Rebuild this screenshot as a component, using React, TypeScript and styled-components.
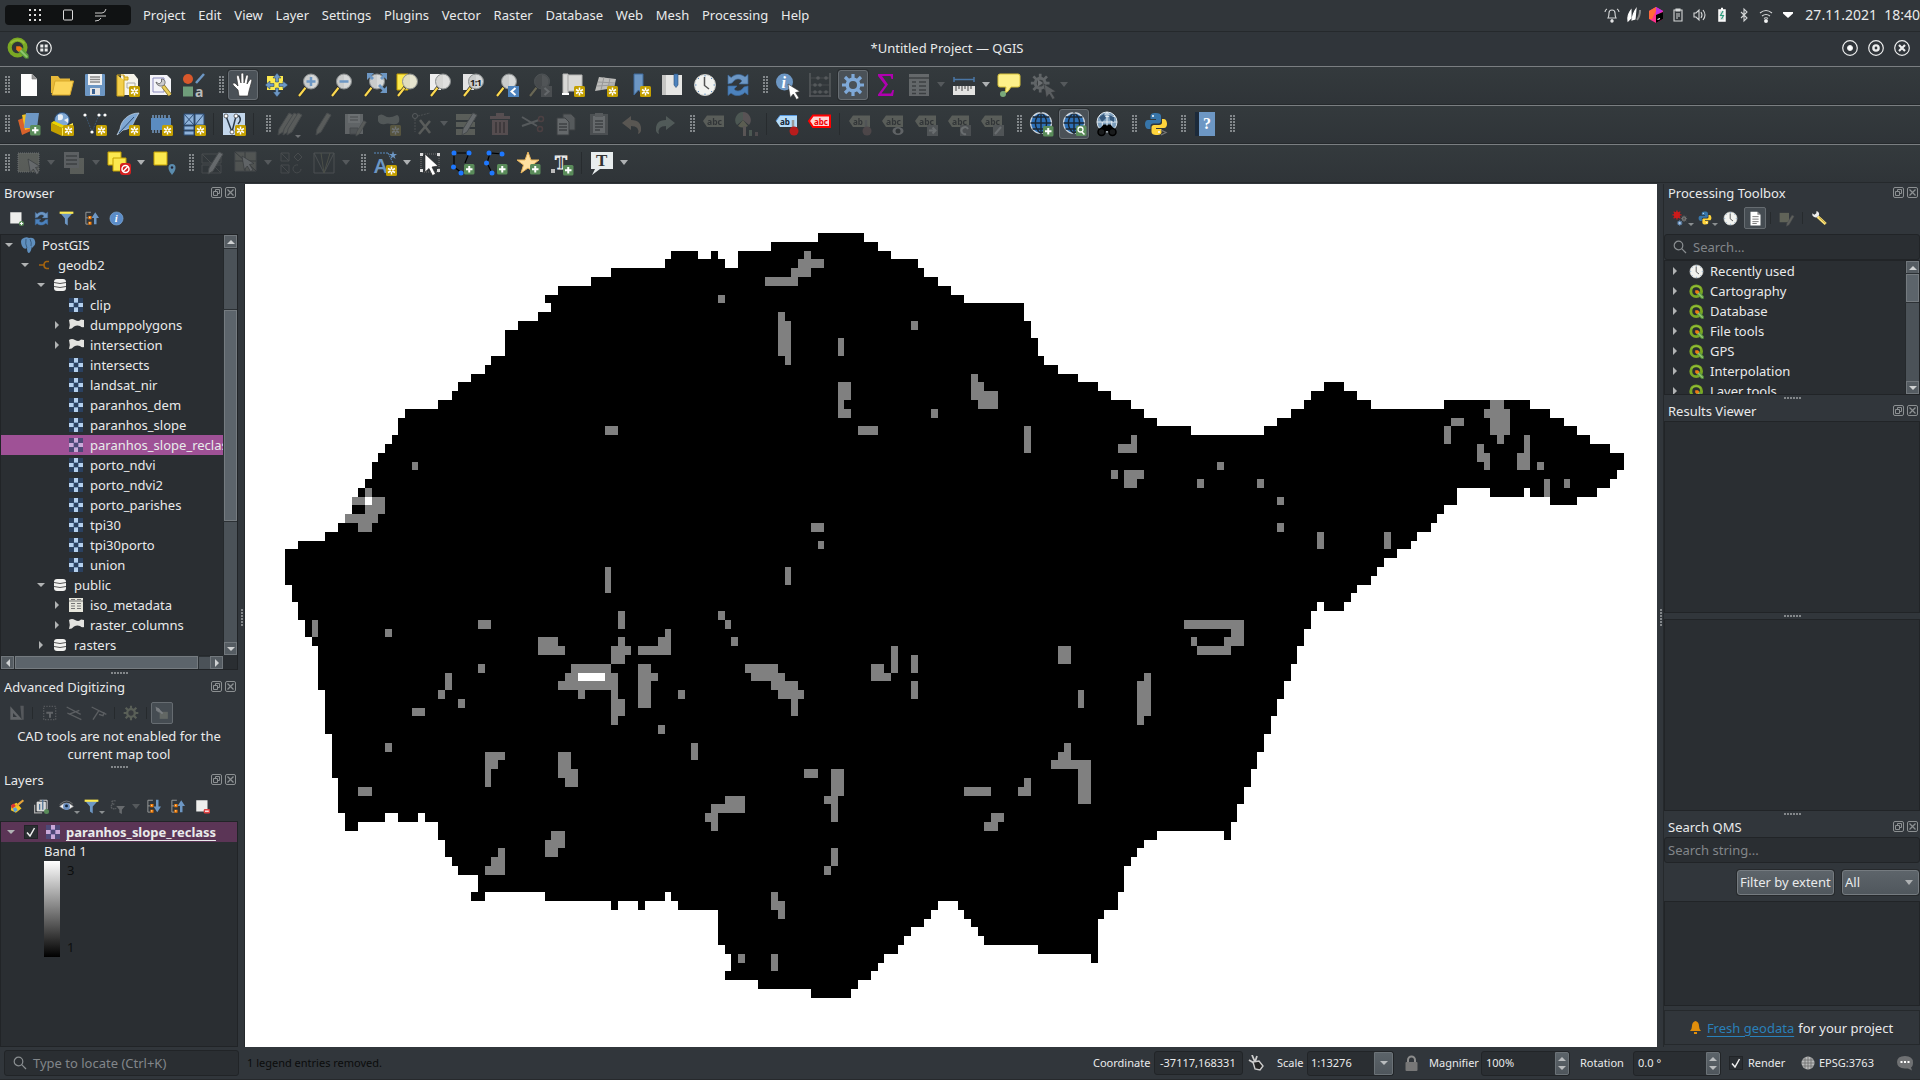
import React from "react";
import styled, { createGlobalStyle } from "styled-components";

const Global = createGlobalStyle`
  * { box-sizing: border-box; }
  body { margin: 0; background: #31363b; overflow: hidden; }
`;

/* ---------- page frame ---------- */
const Shell = styled.div`
  width: 1920px; height: 1080px; display: flex; flex-direction: column;
  background: #31363b; color: #e9eaeb; overflow: hidden;
  font: 13px/20px "Noto Sans", sans-serif; white-space: nowrap;
`;
const SystemBar = styled.header`
  height: 32px; display: flex; align-items: center; padding-left: 5px;
  background: #31363a; border-bottom: 1px solid #25292c; flex: none;
`;
const Pill = styled.div`
  width: 126px; height: 20px; border-radius: 4px; background: #101213; margin-right: 12px;
  display: flex; align-items: center; padding-left: 24px; gap: 20px; margin-top: -1px;
`;
const Menu = styled.nav`
  display: flex; gap: 12.8px; margin-top: -2px; flex: 1;
`;
const Tray = styled.div`
  display: flex; align-items: center; gap: 6px; margin-top: -1px;
`;
const Clock = styled.span`font-size: 14px; margin-left: 3px; white-space: pre; margin-top: -1px;`;
const TitleBar = styled.div`
  height: 34px; flex: none; display: grid; grid-template-columns: 200px 1fr 223px; align-items: center;
  padding: 0 10px 2px 7px; background: #30353a; text-align: center;
`;
const TitleSide = styled.div<{ $end?: boolean }>`
  display: flex; align-items: center; gap: ${p => (p.$end ? 10 : 7)}px;
  justify-content: ${p => (p.$end ? "flex-end" : "flex-start")};
`;
const Body = styled.div`height: 864px; padding-top: 1px; display: flex; flex: none;`;

/* ---------- toolbars ---------- */
const Toolbar = styled.div`
  height: 39px; flex: none; display: flex; align-items: center; padding-bottom: 2px;
  border-top: 1px solid #7a7e81; border-bottom: 1px solid #25292c;
  background: linear-gradient(#343a3d, #2f3438);
  &:last-of-type { border-bottom-color: #7a7e81; }
`;
const Slot = styled.div<{ $on?: boolean; $off?: boolean }>`
  width: 33px; height: 30px; flex: none; display: flex; align-items: center; justify-content: center;
  svg { opacity: ${p => (p.$off ? 0.3 : 1)}; ${p => (p.$off ? "filter: grayscale(.5);" : "")} }
  ${p => p.$on && `
    width: 30px; margin: 0 1.5px; border: 1px solid #686e73; border-radius: 3px;
    background: #4a5157; box-shadow: 0 0 0 1px #292d30;`}
`;
const Grip = styled.div<{ $first?: boolean }>`
  width: ${p => (p.$first ? 12 : 16)}px; height: 18px; flex: none;
  padding-left: ${p => (p.$first ? 5 : 9)}px;
  &::before {
    content: ""; display: block; width: 5px; height: 18px;
    background: repeating-linear-gradient(90deg, transparent 0 2px, #31363a 2px 3px),
      repeating-linear-gradient(#83888b 0 2px, transparent 2px 3px);
  }
`;
const Sep = styled.div`width: 7px; height: 22px; flex: none; padding-left: 3px;
  &::before { content: ""; display: block; width: 1px; height: 22px; background: #272b2e; }
`;
const Caret = styled.div<{ $off?: boolean; $w?: number }>`
  width: ${p => p.$w || 12}px; flex: none; display: flex; justify-content: center;
  &::before { content: ""; border: 4px solid transparent; border-top: 5px solid ${p => (p.$off ? "#55595c" : "#aeb1b3")}; border-bottom: 0; }
`;

/* ---------- docks ---------- */
const Dock = styled.aside<{ $w: number }>`
  width: ${p => p.$w}px; flex: none; display: flex; flex-direction: column;
`;
const DockTitle = styled.div<{ $h: number }>`
  height: ${p => p.$h}px; flex: none; display: flex; align-items: center; gap: 3px; padding: 0 2px 0 4px;
  & > span { flex: 1; }
  svg { margin-top: -2px; }
`;
const SmallBar = styled.div<{ $h: number }>`
  height: ${p => p.$h}px; flex: none; display: flex; align-items: center; padding-left: 4px;
`;
const SmallSlot = styled.div<{ $on?: boolean; $off?: boolean; $w?: number }>`
  width: ${p => p.$w || 25}px; height: 22px; flex: none; display: flex; align-items: center; justify-content: center;
  svg { opacity: ${p => (p.$off ? 0.35 : 1)}; }
  ${p => p.$on && `width: 22px; margin: 0 1px; border: 1px solid #666c71; border-radius: 2px; background: #454c52;`}
`;
const SmallSep = styled.div`width: 7px; height: 12px; flex: none;
  &::before { content: ""; display: block; width: 1px; height: 12px; margin-left: 3px; background: #262a2d; }`;
const MiniCaret = styled.i`
  width: 0; height: 0; margin: 12px -5px 0 0; border: 3px solid transparent; border-top: 3px solid #8b8f91; border-bottom: 0;
`;
const Well = styled.div<{ $h: number; $row?: boolean }>`
  height: ${p => p.$h}px; flex: none; background: #2a2e32; border: 1px solid #212427; overflow: hidden;
  display: flex; flex-direction: ${p => (p.$row ? "row" : "column")};
`;
const Dots = styled.div<{ $h: number }>`
  height: ${p => p.$h}px; flex: none; display: flex; align-items: center; justify-content: center;
  &::before { content: ""; width: 17px; height: 2px; background: repeating-linear-gradient(90deg, #83878a 0 2px, transparent 2px 3px); }
`;
const VDots = styled.div`
  width: 7px; flex: none; display: flex; align-items: center; justify-content: center; padding-left: 2px; border-right: 1px solid #25292c;
  &::before { content: ""; height: 17px; width: 2px; margin-top: 4px; background: repeating-linear-gradient(#83878a 0 2px, transparent 2px 3px); }
`;
const TreeArea = styled.div`display: flex; flex: 1; min-height: 0;`;
const Rows = styled.div`flex: 1; min-width: 0; overflow: hidden;`;
const Row = styled.div<{ $depth: number; $sel?: boolean }>`
  height: 20px; display: flex; align-items: center; padding-left: ${p => p.$depth * 16}px; overflow: hidden;
  background: ${p => (p.$sel ? "#9f5196" : "transparent")};
`;
const Expander = styled.i<{ $state?: string; $w?: number }>`
  width: ${p => p.$w || 19}px; flex: none; display: flex; justify-content: center; padding-right: 4px;
  &::before {
    content: ""; border: 4px solid transparent;
    ${p => p.$state === "open" && "border-top: 4px solid #b1b3b4; border-bottom: 0;"}
    ${p => p.$state === "closed" && "border-left: 4px solid #b1b3b4; border-right: 0;"}
  }
`;
const RowLabel = styled.span`margin-left: 6px;`;

const VScroll = styled.div`width: 14px; flex: none; display: flex; flex-direction: column; background: #4b5258; border-left: 1px solid #25292c;`;
const HScroll = styled.div`height: 14px; flex: none; display: flex; background: #4b5258; border-top: 1px solid #25292c; margin-right: 14px;`;
const ScrollBtn = styled.div<{ $dir: "up" | "down" | "left" | "right" }>`
  width: 13px; height: 13px; flex: none; background: #555c62; border: 1px solid #71777c;
  display: flex; align-items: center; justify-content: center;
  &::before {
    content: ""; border: 4px solid transparent;
    ${p => ({
      up: "border-bottom-color: #cfd1d2; border-top: 0;",
      down: "border-top-color: #cfd1d2; border-bottom: 0;",
      left: "border-right-color: #cfd1d2; border-left: 0;",
      right: "border-left-color: #cfd1d2; border-right: 0;",
    }[p.$dir])}
  }
`;
const Track = styled.div<{ $n: number }>`flex: ${p => p.$n} 1 0; border: solid #2c3135; border-width: 1px 0 0;`;
const Thumb = styled.div<{ $n: number }>`flex: ${p => p.$n} 1 0; background: #5c646b; border: 1px solid #757b80; outline: 1px solid #2b3034;`;

const Field = styled.div<{ $h: number; $w?: number; $gap?: number; $dim?: boolean; $px?: number }>`
  height: ${p => p.$h}px; ${p => p.$w && `width: ${p.$w}px;`} flex: none; display: flex; align-items: center; gap: ${p => p.$gap || 0}px;
  border: 1px solid #212427; border-radius: 3px; background: #2a2e32; padding-left: ${p => p.$px ?? 3}px;
  color: ${p => (p.$dim ? "#82868a" : "#e9eaeb")};
`;
const FieldText = styled.span`flex: 1;`;
const Spin = styled.div<{ $w: number; $one?: boolean }>`
  width: ${p => p.$w}px; height: 23px; background: linear-gradient(#5b6369, #4f565c); border: 1px solid #6b7277; border-radius: 0 2px 2px 0;
  display: flex; flex-direction: column; align-items: center; justify-content: center; gap: 5px;
  &::before { content: ""; border: 4px solid transparent; border-bottom-color: #b9bcbe; border-top: 0; ${p => p.$one && "display:none;"} }
  &::after { content: ""; border: 4px solid transparent; border-top-color: #b9bcbe; border-bottom: 0; }
`;
const Notice = styled.p`margin: 0; height: 37px; text-align: center; line-height: 18px; white-space: pre-line;`;
const LayerRow = styled.div`height: 20px; display: flex; align-items: center; background: #5b3556; padding-left: 5px;
  b { text-decoration: underline; text-underline-offset: 3px; margin-left: 6px; letter-spacing: -.04px; }`;
const Legend = styled.div`padding-left: 43px; margin-top: -1px;`;
const Ramp = styled.div`display: flex; height: 96px; color: #0d0e0f;
  &::before { content: ""; width: 16px; background: linear-gradient(#fff, #000); margin-right: 7px; }`;
const RampLabels = styled.div`display: flex; flex-direction: column; justify-content: space-between; margin-top: -1px;`;
const Check = styled.div`width: 14px; height: 14px; border: 1px solid #212427; background: #2a2e32; display: flex; align-items: center; justify-content: center; flex: none;`;
const Buttons = styled.div`height: 38px; flex: none; display: flex; align-items: center; justify-content: flex-end; gap: 8px; padding-right: 1px;`;
const PushButton = styled.div<{ $w: number }>`
  width: ${p => p.$w}px; height: 25px; display: flex; align-items: center; justify-content: space-between; padding: 0 2px;
  border: 1px solid #757b80; border-radius: 3px; background: linear-gradient(#5d646a, #50575d); box-shadow: 0 0 0 1px #26292c;
`;
const Card = styled.div`height: 35px; flex: none; border: 1px solid #25292c; display: flex; align-items: center; justify-content: center; margin-top: 4px; padding-right: 1px;`;
const Link = styled.span`color: #2a80b9; text-decoration: underline; text-underline-offset: 3px; margin: 0 4px 0 6px;`;
const Canvas = styled.main`width: 1412px; height: 863px; flex: none; background: #fff; svg { display: block; }`;

const Status = styled.footer`
  flex: 1; display: flex; align-items: center; padding: 0 7px 0 4px; font-size: 11px; border-bottom: 1px solid #26292c;
`;
const Locator = styled(Field)`font-size: 13px;`;
const Message = styled.span`margin-left: 8px; color: #0b0c0c; width: 846px;`;
const StatusLabel = styled.span<{ $w: number }>`width: ${p => p.$w}px; flex: none;`;
const Gap = styled.span<{ $w: number }>`width: ${p => p.$w}px; flex: none; display: flex; justify-content: center;`;
const GrabSlot = styled.span`width: 34px; flex: none; padding-left: 5px; display: flex;`;

/* ---------- icon drawing ---------- */
const BLUE = "#6d97c4";
const Star = ({ x = 13, y = 13 }) => (
  <g transform={`translate(${x} ${y})`}>
    <rect width="11" height="11" rx="1.5" fill="#c4a000" />
    <path d="M5.500 1.500V9.500M2 3.500L9 7.500M9 3.500L2 7.500" stroke="#fff" strokeWidth="1.500" />
    <circle cx="5.500" cy="5.500" r="1" fill="#c4a000" />
  </g>
);
const Plus = ({ x = 13, y = 13 }) => (
  <g transform={`translate(${x} ${y})`}>
    <rect width="10.500" height="10.500" rx="1.500" fill="#5a8c5a" />
    <path d="M5.250 2v6.500M2 5.250h6.500" stroke="#fff" strokeWidth="2" />
  </g>
);
const Lens = ({ fill = "#c9cbcb" }) => (
  <>
    <path d="M9 14L2 23" stroke="#222" strokeWidth="3.400" />
    <path d="M8.500 14.800L2 23" stroke="#fcd94f" strokeWidth="2.200" />
    <circle cx="14" cy="8.500" r="7.500" fill={fill} stroke="#8b8f90" />
    <path d="M14 2a6.500 6.500 0 0 1 0 13z" fill="#fff" opacity=".25" />
  </>
);
const Cursor = ({ x = 0, y = 0, f = "#fff" }) => (
  <path transform={`translate(${x} ${y})`} d="M0 0L12 7.500L7.500 8.500L11 14L8.500 15.500L5.300 10L2.300 13.500Z" fill={f} stroke="#333" strokeWidth=".6" />
);
const Pencil = ({ x = 0, c = "#b5b09a" }) => (
  <path transform={`translate(${x} 0)`} d="M15 1l4 2L9 20l-5 3 1-6z" fill={c} stroke="#777" />
);
const Tag = ({ fill = "#b7b58a", c = "#333", t = "abc" }) => (
  <>
    <path d="M1 9L5 3.500H22V15H5Z" fill={fill} />
    <text x="5" y="12.500" fontFamily="Noto Sans" fontWeight="700" fontSize="9" textLength={t === "ab" ? 10 : 15} lengthAdjust="spacingAndGlyphs" fill={c}>{t}</text>
  </>
);
const Globe = () => (
  <>
    <circle cx="12" cy="11" r="10.500" fill="#2d6fb5" stroke="#cfd6dc" strokeWidth="1.200" />
    <path d="M12 .5V21.500M1.500 11H22.500M3.500 5H20.500M3.500 17H20.500M12 .5C4.500 6 4.500 16 12 21.500M12 .5C19.500 6 19.500 16 12 21.500" fill="none" stroke="#1a2733" strokeWidth="1.400" />
    <path d="M5 4a10 10 0 0 1 14 0" stroke="#fff" fill="none" opacity=".6" />
  </>
);
const Refresh = () => (
  <>
    <path d="M2 11V2l3.200 2.600C9 .5 15.500 .5 19 4l3-2.500V11H13l3-3c-2-2.500-5.500-2.500-8-.3L6 10Z" fill={BLUE} stroke="#3e6a9c" strokeWidth=".7" />
    <path d="M22 13v9l-3.200-2.600C15 23.500 8.500 23.500 5 20l-3 2.500V13H11l-3 3c2 2.500 5.500 2.500 8 .3L18 14Z" fill="#4c82bd" stroke="#3e6a9c" strokeWidth=".7" />
  </>
);
const ClockFace = () => (
  <>
    <circle cx="12" cy="12" r="10.500" fill="#f2f3f0" stroke="#c9cbc8" />
    <path d="M11.500 4V12.500L16 16" stroke="#555" strokeWidth="1.500" fill="none" />
    <path d="M12 2v1.500M12 20.500V22M2 12h1.500M20.500 12H22M5 5l1 1M18 18l1 1M19 5l-1 1M5 19l1-1" stroke="#5b8cc0" />
  </>
);
const Python = () => (
  <>
    <path d="M12 1c-5 0-5.500 1.500-5.500 3v3H12v1H4C2 8 1 10 1 12s1 5 3 5h2.500v-3c0-1.500 1-2.500 3-2.500h5c1.500 0 2.500-1 2.500-2.500V4c0-2-2-3-5-3z" fill="#3775a9" />
    <path d="M12 23c5 0 5.500-1.500 5.500-3v-3H12v-1h8c2 0 3-2 3-4s-1-5-3-5h-2v3.500c0 1.500-1 2.500-3 2.500h-5c-1.500 0-2.500 1-2.500 2.500V20c0 2 2 3 4.500 3z" fill="#ffd43b" />
    <circle cx="9" cy="4" r="1" fill="#fff" /><circle cx="15" cy="20" r="1" fill="#fff" />
  </>
);
const QLogo = () => (
  <>
    <circle cx="11.500" cy="11.500" r="8.600" fill="none" stroke="#7aa824" strokeWidth="4.600" />
    <path d="M4 7a9.500 9.500 0 0 1 15 0" stroke="#95bd3a" strokeWidth="2" fill="none" />
    <path d="M11 11h5l7.500 8.500v4H20L11 15z" fill="#5c9e3c" />
    <path d="M11.500 11.500L22 22" stroke="#93c56f" strokeWidth="2" />
    <path d="M10 10h4.500l2 3-3.500 3-3-2z" fill="#ee7913" />
  </>
);
const Gear = ({ c = BLUE, hole = "#4a5157" }) => (
  <>
    <path d="M12 1V23M1 12H23M4 4L20 20M20 4L4 20" stroke={c} strokeWidth="3.200" />
    <circle cx="12" cy="12" r="7.500" fill={c} /><circle cx="12" cy="12" r="4" fill={hole} />
  </>
);
const Funnel = () => (
  <>
    <path d="M2 3H22L14 12V23L9.500 20V12Z" fill={BLUE} /><path d="M1 1H23V4.500H1Z" fill="#fce94f" />
  </>
);
const TreeArrow = ({ down }: { down?: boolean }) => (
  <>
    <path d="M3 2V21M3 2H11M3 11H7M3 21H7" stroke="#9a9c9c" strokeWidth="1.500" fill="none" />
    <path d="M7 8h5v5H7zM7 17h5v5H7z" fill="#f57900" /><path d="M8 9h2v2H8zM8 18h2v2H8z" fill="#ffd08a" />
    <path d={down ? "M16 1H20V12H24L18 21L12 12H16Z" : "M16 21H20V11H24L18 2L12 11H16Z"} fill={BLUE} />
  </>
);
const Wrench = () => (
  <>
    <path d="M10 10L22 21" stroke="#fce27a" strokeWidth="4.500" /><path d="M12 11L22 20" stroke="#a98a1c" strokeWidth="1" />
    <path d="M2 5l3 2 3-2V2c3 0 5 3 4 6l-3 3c-3 1-6-1-7-3z" fill="#eee" />
  </>
);
const RasterGlyph = ({ sel }: { sel?: boolean }) => (
  <svg width="14" height="14" viewBox="0 0 14 14" shapeRendering="crispEdges">
    <rect width="14" height="14" fill={sel ? "#4e4877" : "#2b4160"} />
    <path d="M5 0h4v4H5zM5 10h4v4H5zM0 5h4v4H0zM10 5h4v4H10z" fill={sel ? "#c9a8d8" : "#b4cfec"} />
    <path d="M5 4h4v1H5zM4 5h1v4H4zM9 5h1v4H9zM5 9h4v1H5z" fill={sel ? "#9a86bd" : "#7c9bc0"} />
  </svg>
);

const paper = <path d="M4 1H15L20 6V23H4Z" fill="#fdfdfd" />;
const glyphs: Record<string, React.ReactNode> = {
  newDoc: <>{paper}<path d="M15 1v5h5" fill="#999" stroke="#777" strokeWidth=".6" /></>,
  open: <><path d="M1 3H8L10 5.500H20V9H5L3 20H1Z" fill="#e8b93a" /><path d="M5 8H23.500L20 22H2Z" fill="#fcd55a" stroke="#d9a92a" /></>,
  save: <><rect x="2" y="1" width="20" height="22" rx="1" fill={BLUE} /><path d="M5 1H19V12H5Z" fill="#f2f2f2" /><path d="M7 4h10M7 6.500h10M7 9h10" stroke="#8a8a8a" strokeWidth="1.300" /><path d="M7 15H17V22H7Z" fill="#e4e4e4" /><path d="M9 16h3v5H9z" fill="#3c6291" /></>,
  layoutNew: <><path d="M5 1H18L22 6V22H5Z" fill="#f6f4ea" /><path d="M1 2H8V7H12V4H8V2M1 2V23H8V7" fill="#f4cf4b" stroke="#caa11a" /><path d="M11 10h8v5h-8z" fill="none" stroke="#aaa" /><Star /></>,
  layoutMgr: <><path d="M1 2H18L22 6V22H1Z" fill="#f4f4f8" /><path d="M4 5H15V19H4Z" fill="none" stroke="#8a8ac0" /><path d="M14 13L21 22" stroke="#8a7426" strokeWidth="4.200" /><path d="M14 13L21 22" stroke="#e8cc5a" strokeWidth="2.800" /><path d="M7 9l3 2 2.500-2V6c4 0 4.500 4.500 2.300 6.200s-7 1-7.800-3.200z" fill="#ccc" stroke="#555" strokeWidth=".8" /></>,
  style: <><circle cx="6" cy="6" r="5" fill="#d9582b" /><path d="M14 10L22 1" stroke={BLUE} strokeWidth="2.500" /><path d="M1 13.500h10v10H1z" fill="#6f9d7a" /><text x="13" y="23.500" fontFamily="Noto Sans" fontSize="14" fontWeight="700" fill="#b9bbbb">a</text></>,
  hand: <path d="M8 23L7 17 2 12c-1-2 1-3 3-1l2 2L5.500 4c0-2 2-2.300 2.700-.5L10 10V1.500c0-2 2.500-2 2.700 0L13 10l1.800-7c.6-1.800 2.700-1.300 2.500.7L16 11l2.500-4c1-1.500 2.800-.6 2.300 1L18 18l-1 5Z" fill="#fff" stroke="#333" strokeWidth=".7" />,
  panSel: <><path d="M3 3H19V17H3Z" fill="#fce94f" /><g fill={BLUE} stroke="#23384f" strokeWidth=".5"><path d="M13 0l4 5h-2.500v4h-3V5H9zM13 24l-4-5h2.500v-4h3v4H17zM1 12l5-4v2.500h4v3H6V16zM24 12l-5-4v2.500h-4v3h4V16z" /></g></>,
  zoomIn: <><Lens /><path d="M14 4v9M9.500 8.500h9" stroke={BLUE} strokeWidth="2.500" /></>,
  zoomOut: <><Lens /><path d="M9.500 8.500h9" stroke={BLUE} strokeWidth="2.500" /></>,
  zoomFull: <><Lens /><path d="M4 0h7L8.500 2.500 11 5 9 7 6.500 4.500 4 7zM24 0h-7l2.500 2.500L17 5l2 2 2.500-2.500L24 7zM24 20h-7l2.500-2.500L15 13l2-2 4.500 4.500L24 13z" fill={BLUE} /></>,
  zoomSel: <><path d="M1 1H12V17H1Z" fill="#fce94f" stroke="#c4a000" /><Lens fill="#dfdcc0" /></>,
  zoomLayer: <><path d="M1 1H12V17H1Z" fill="#eee" /><Lens fill="#d6d6d4" /></>,
  zoomNative: <><path d="M1 1H12V17H1Z" fill="#e4e4e4" /><Lens /><text x="8" y="12.500" fontFamily="Noto Sans" fontSize="9.500" fontWeight="700" textLength="12" fill="#222">1:1</text></>,
  zoomLast: <><Lens /><rect x="13" y="13" width="11" height="11" fill="#4c82bd" /><path d="M20.500 15L16.500 18.500L20.500 22" stroke="#fff" strokeWidth="2" fill="none" /></>,
  zoomNext: <><Lens fill="#777" /><rect x="13" y="13" width="11" height="11" fill="#888" /><path d="M16.500 15L20.500 18.500L16.500 22" stroke="#ddd" strokeWidth="2" fill="none" /></>,
  mapView: <><path d="M2 1H7V21H2ZM7 2H21V18H7Z" fill="#d8d8d6" stroke="#b5b5b3" /><path d="M1 20h7v2H1z" fill="#fff" /><Star /></>,
  map3d: <><path d="M5 4L22 6L20 15L1 18Z" fill="#bdbdbb" /><path d="M4 9l17 1M3 13l17-1M10 4L7 17M16 5l-2 11" stroke="#999" fill="none" /><Star /></>,
  bookmarkNew: <><path d="M7 1H16V22L11.500 17L7 22Z" fill={BLUE} stroke="#3e6a9c" /><Star /></>,
  bookmarks: <><path d="M2 2H22V22H2Z" fill="#e6e6e4" /><path d="M2 2H6V22H2Z" fill="#c5c5c3" /><path d="M14 1H18V12L16 14.500L14 12Z" fill="#4c82bd" stroke="#2c4d75" strokeWidth=".6" /></>,
  clock: <ClockFace />, refresh: <Refresh />,
  identify: <><circle cx="9.500" cy="9" r="8.500" fill={BLUE} /><text x="6.500" y="14.500" fontFamily="Liberation Serif" fontStyle="italic" fontWeight="700" fontSize="16" fill="#fff">i</text><Cursor x={13} y={11} /></>,
  abacus: <><path d="M2 0V24M22 0V24M1 23H23" stroke="#aaa" strokeWidth="1.500" /><path d="M3 5H21M3 12H21M3 19H21" stroke="#777" /><g fill="#a7a7a7"><circle cx="10" cy="5" r="1.800" /><circle cx="18" cy="5" r="1.800" /><circle cx="7" cy="12" r="1.800" /><circle cx="12" cy="12" r="1.800" /><circle cx="7" cy="19" r="1.800" /><circle cx="12" cy="19" r="1.800" /><circle cx="18" cy="19" r="1.800" /></g></>,
  gear: <Gear c="#7fa9d8" />,
  sigma: <path d="M4 1H19V6H17.500L16.500 3H8L14 11.500L7.500 20.500H17L18.500 17H20L19 23H4V21.500L11 12L4 3Z" fill="#b000b0" />,
  table: <><path d="M2 1H22V23H2Z" fill="#d8d8d8" /><path d="M2 5H22M5 9h4M12 9h7M5 13h4M12 13h7M5 17h4M12 17h7M5 20.500h4M12 20.500h7" stroke="#555" strokeWidth="1.500" /></>,
  ruler: <><path d="M2 4V9M22 4V9M2 6.500H22" stroke="#4a76a5" strokeWidth="1.500" /><path d="M1 13H23V22H1Z" fill="#e4e4e2" /><path d="M4 13v5M7 13v3M10 13v5M13 13v3M16 13v5M19 13v3" stroke="#444" /></>,
  tip: <><path d="M3 1H21Q23 1 23 3V12Q23 14 21 14H14Q11 20 7 20Q9 18 9 14H3Q1 14 1 12V3Q1 1 3 1Z" fill="#fdf08a" stroke="#d8c33a" /><circle cx="6" cy="21" r="3" fill="#7aa87a" /></>,
  gearRun: <><g transform="scale(.85)"><Gear c="#ccc" hole="#555" /></g><path d="M8 6.500l5 3.500-5 3.500z" fill="#eee" /><Cursor x={14} y={11} f="#bbb" /></>,
  // data source toolbar
  dataSrc: <><path d="M1 8L12 4 16 18 5 23Z" fill="#d9622b" /><path d="M5 3L15 1 18 15 8 18Z" fill="#f0c020" /><path d="M9 1H22L20 16H7Z" fill={BLUE} /><Plus /></>,
  geopkg: <><circle cx="12" cy="8" r="7.500" fill="#7fa8d4" stroke="#2c4d75" /><path d="M8 3q5-2 5 2t-5 3zM14 8l4-2v5z" fill="#e9eff5" /><path d="M1 11L12 16V24L1 19Z" fill="#c4a000" /><path d="M12 16L23 11V19L12 24Z" fill="#fce94f" /><path d="M1 11L4 9L15 14L12 16Z" fill="#edd400" /><Star /></>,
  shape: <><path d="M2 2L9 20L16 3H22" fill="none" stroke="#3d566f" strokeWidth="1" strokeDasharray="2 1" /><g fill="#fff"><circle cx="2" cy="3" r="1.600" /><circle cx="9" cy="20" r="1.600" /><circle cx="16" cy="3" r="1.600" /><circle cx="22" cy="3" r="1.600" /></g><Star /></>,
  feather: <><path d="M23 1C13 1 5 8 4 17L1 23 7 18C16 17 17 12 19 8z" fill="#7fa8d4" stroke="#c6d8ea" strokeWidth=".7" /><path d="M3 21L18 5" stroke="#2c4d75" /><Star /></>,
  chip: <><path d="M2 6H22V18H2Z" fill="#5b8cc0" /><path d="M4 3v3M7 3v3M10 3v3M13 3v3M16 3v3M20 3v3M4 18v3M7 18v3M10 18v3" stroke="#7fa8d4" strokeWidth="1.300" /><Star /></>,
  mesh: <><path d="M2 2H12V13H2ZM13 2H22V13H13ZM2 14H12V18H2ZM2 19H12V23H2Z" fill="#8fb3da" stroke="#2c4d75" /><path d="M2 2L12 13M12 2L2 13M13 13L22 2" stroke="#2c4d75" /><Star /></>,
  virtual: <><path d="M1 1H23V23H1Z" fill="#c3d7ec" /><path d="M4 4L10 20L14 4H17Q20 8 16 12" fill="none" stroke="#2b3b4b" strokeWidth="1.500" /><g fill="#fff" stroke="#333" strokeWidth=".7"><circle cx="4" cy="4" r="2" /><circle cx="10" cy="20" r="2" /><circle cx="14" cy="4" r="2" /></g><Star /></>,
  pencils: <><Pencil x={-4} /><Pencil x={1} /><Pencil x={5} /><path d="M17 23h6l-3 3z" fill="#fff" /></>,
  pencil: <Pencil x={1} />,
  saveEdit: <><rect x="1" y="2" width="18" height="20" fill="#ccc" /><path d="M4 2h12v9H4z" fill="#eee" /><path d="M6 5h8M6 8h8M6 16h8v6H6z" stroke="#777" fill="#999" /><g transform="translate(7 8) scale(.7)"><Pencil x={3} /></g></>,
  polyNew: <><path d="M1 4Q4 1 8 4T20 3Q23 4 22 10Q20 13 15 12T8 12Q3 13 1 9Z" fill="#9aa39a" /><Star /></>,
  vertexTool: <><circle cx="5" cy="4" r="2.500" fill="none" stroke="#aaa" /><path d="M5 7V20M8 4L20 1" stroke="#888" strokeDasharray="2 1" /><path d="M10 8l10 13M20 9L9 22" stroke="#bbb39a" strokeWidth="2.500" /></>,
  multiEdit: <><path d="M1 2H20V8H1ZM1 10H20V15H1ZM1 17H20V23H1Z" fill="#b7b58a" /><Pencil x={3} c="#ddd" /></>,
  trash: <><path d="M4 8H20V23H4ZM2 4H22V7H2ZM8 1H16V4H8Z" fill="#c97a7a" /><path d="M8 10v11M12 10v11M16 10v11" stroke="#5a2a2a" strokeWidth="1.500" /></>,
  cut: <><path d="M1 5L16 14M1 14L18 8" stroke="#aaa" strokeWidth="2" /><circle cx="20" cy="7" r="2.500" fill="none" stroke="#b04a4a" strokeWidth="1.500" /><circle cx="19" cy="17" r="2.500" fill="none" stroke="#b04a4a" strokeWidth="1.500" /></>,
  copy: <><path d="M9 2h8l4 4v12H9z" fill="#aaa" stroke="#555" /><path d="M3 6h8l4 4v13H3z" fill="#ddd" stroke="#555" /><path d="M5 12h8M5 15h8M5 18h8" stroke="#555" strokeWidth="1.300" /></>,
  paste: <><rect x="3" y="2" width="18" height="21" fill="#888" /><path d="M6 4h12v17H6z" fill="#ddd" /><path d="M8 1h8v4H8z" fill="#aaa" /><path d="M8 9h8M8 12h8M8 15h8M8 18h5" stroke="#555" strokeWidth="1.300" /></>,
  undo: <path d="M2 11L11 4V8Q22 8 21 19Q20 22 18 22Q20 14 11 14V18Z" fill="#c89a72" />,
  redo: <path d="M22 11L13 4V8Q2 8 3 19Q4 22 6 22Q4 14 13 14V18Z" fill="#8fae96" />,
  tag: <Tag />,
  diagram: <><path d="M8 8V0A8 8 0 0 0 2 13Z" fill="#7aa87a" /><path d="M8 8V0a8 8 0 0 1 6 13Z" fill="#c98a8a" /><path d="M8 8l-5 6q5 3 10 0z" fill="#c8b85a" /><path d="M8 14h3v10H8z" fill="#c98" /><path d="M14 18h3v6h-3z" fill="#7a7" /><path d="M20 20h3v4h-3z" fill="#a77" /></>,
  tagPin: <><Tag fill="#b5dcfa" t="ab" c="#123" /><path d="M1 9L5 3.500H22" stroke="#5b9be0" fill="none" /><path d="M18 8v7" stroke="#999" strokeWidth="2.500" /><circle cx="19" cy="19" r="4.500" fill="#b81c1c" /></>,
  tagRed: <><path d="M1 9L5 3.500H22V15H5Z" fill="#ffd5d5" stroke="#f00" strokeWidth="2" /><text x="6" y="12.500" fontFamily="Noto Sans" fontWeight="700" fontSize="9" textLength="14" lengthAdjust="spacingAndGlyphs" fill="#e00">abc</text></>,
  tagPinOff: <><Tag t="ab" /><path d="M18 8v7" stroke="#999" strokeWidth="2.500" /><circle cx="19" cy="19" r="4.500" fill="#a66" /></>,
  tagEye: <><Tag /><ellipse cx="17" cy="19" rx="5.500" ry="4" fill="#ccc" /><circle cx="17" cy="19" r="2.500" fill="#333" /></>,
  tagMove: <><Tag /><rect x="13" y="13" width="11" height="11" fill="#999" /><path d="M15 18.500h6M18.500 15.500l3 3-3 3" stroke="#eee" strokeWidth="2" fill="none" /></>,
  tagRot: <><Tag /><rect x="13" y="13" width="11" height="11" fill="#888" /><path d="M21 17a3.500 3.500 0 1 0-2 5" stroke="#eee" strokeWidth="2" fill="none" /></>,
  tagEdit: <><Tag /><rect x="13" y="13" width="11" height="11" fill="#999" /><path d="M15 22l6-7" stroke="#eee" strokeWidth="2" /></>,
  globePlus: <><Globe /><Plus x={14} y={14} /></>,
  globeSearch: <><Globe /><rect x="14" y="13.500" width="10.500" height="10.500" rx="1.500" fill="#5a8c5a" /><circle cx="18.500" cy="17.500" r="2.500" fill="none" stroke="#fff" strokeWidth="1.300" /><path d="M20 20l2.500 2.500" stroke="#fff" strokeWidth="1.500" /></>,
  binoc: <><circle cx="12" cy="10" r="10" fill="#7d9fbd" stroke="#dfe8ef" /><path d="M12 0V20M2 10H22M4 4.500H20M12 0Q4 8 9 19M12 0Q20 8 15 19" stroke="#e9eff5" strokeWidth=".9" fill="none" /><path d="M4 5l5-3 2 4-4 4zM14 3l5 2v5l-4-2z" fill="#35587c" /><path d="M5 17L8.500 12.500h2.500l1 1.500 1-1.500h2.500L19 17l2 3h-7l-2-1-2 1H3z" fill="#000" /><circle cx="6.500" cy="20" r="3.500" fill="#1a1c1d" stroke="#000" strokeWidth="1.500" /><circle cx="17.500" cy="20" r="3.500" fill="#1a1c1d" stroke="#000" strokeWidth="1.500" /></>,
  python: <><Python /><path d="M17 18l5 2.500-5 2.500" stroke="#777" strokeWidth="1.300" fill="none" /></>,
  help: <><path d="M2 0H6V24H2Z" fill="#1c2a3a" /><path d="M6 0H22V24H6Z" fill={BLUE} /><text x="10" y="17" fontFamily="Liberation Serif" fontSize="16" fontWeight="700" fill="#fff">?</text></>,
  // selection and annotation toolbar
  selRect: <><path d="M1 2H22V21H1Z" fill="#b9b68e" stroke="#eee" strokeDasharray="1 1" /><Cursor x={11} y={8} f="#ddd" /></>,
  selForm: <><path d="M8 7H22V23H8Z" fill="#b9b68e" /><path d="M2 1H17V17H2Z" fill="#bbb" /><path d="M4 5h11M4 9h11M4 13h11" stroke="#555" strokeWidth="1.500" /></>,
  deselect: <><path d="M1 1H14V14H1Z" fill="#fce94f" stroke="#c4a000" /><path d="M6 7H19V20H6Z" fill="#fce94f" stroke="#c4a000" /><rect x="13" y="12" width="11" height="12" rx="3" fill="#d42020" /><circle cx="18.500" cy="18" r="3.500" fill="none" stroke="#fff" strokeWidth="1.500" /><path d="M16 20.500l5-5" stroke="#fff" strokeWidth="1.500" /></>,
  selLoc: <><path d="M2 1H15V14H2Z" fill="#fce94f" stroke="#c4a000" /><path d="M20 24C17 20 16.500 18.500 16.500 16.500a3.500 3.500 0 0 1 7 0C23.500 18.500 23 20 20 24Z" fill="#5b8cae" /><circle cx="20" cy="16.500" r="1.200" fill="#223" /></>,
  meshEdit: <><path d="M1 3H20V12H1ZM1 14H20V22H1Z M1 3L20 22" fill="none" stroke="#777" /><Pencil x={3} c="#ddd" /></>,
  meshSel: <><path d="M1 1H22V20H1Z" fill="#9b9980" stroke="#777" /><path d="M1 10H22M11 1V20M1 1L22 20" stroke="#444" /><Cursor x={8} y={5} f="#ccc" /></>,
  meshXf: <><path d="M2 2h8v8H2zM15 6l4-4 4 4-4 4zM2 14h8v8H2zM2 2l8 8M2 14l8 8" fill="none" stroke="#777" /><path d="M22 18a4 4 0 1 1-3-4" fill="none" stroke="#777" /></>,
  meshTri: <><path d="M2 2H22V22H2Z M2 2L12 22L22 2" fill="none" stroke="#888" /><path d="M9 2l3 20 6-20" stroke="#8a8a4a" fill="none" /></>,
  annotLayer: <><path d="M1 2H15M15 2L20 12" stroke="#5b8cc0" strokeDasharray="2 1" fill="none" /><text x="1" y="22" fontFamily="Noto Sans" fontSize="20" fontWeight="600" fill={BLUE}>A</text><path d="M20 0l1 3h3l-2.500 2 1 3L20 6l-2.500 2 1-3L16 3h3z" fill={BLUE} /><Star y={14} /></>,
  annotSel: <><path d="M3 3H21V21H3Z" fill="none" stroke="#777" strokeDasharray="1 1" /><path d="M2 2h3v3H2zM19 2h3v3h-3zM2 18h3v3H2zM19 18h3v3h-3z" fill="#ddd" /><path d="M7 3L20 15L14 16L17.500 23L14.500 24.500L11 17.500L7 21Z" fill="#fff" stroke="#222" strokeWidth=".6" /></>,
  annotPoly: <><path d="M3 2H18L14 12M3 2V16L11 22" stroke="#000" strokeWidth="1.200" fill="none" /><g fill="#1e78ff"><circle cx="3" cy="2" r="2.500" /><circle cx="18" cy="2" r="2.500" /><circle cx="2.500" cy="16" r="2.500" /><circle cx="10" cy="22" r="2.500" /></g><Plus /></>,
  annotLine: <><path d="M18 3L6 2L3 12L8 22" stroke="#000" strokeWidth="1.200" fill="none" /><g fill="#1e78ff"><circle cx="5" cy="2" r="2.500" /><circle cx="18" cy="3" r="2.500" /><circle cx="2.500" cy="12" r="2.500" /><circle cx="8" cy="22" r="2.500" /></g><Plus /></>,
  annotStar: <><path d="M11 1l3 8h8l-6.500 5L18 22l-7-5-7 5 2.500-8L0 9h8z" fill="#ffe0a0" stroke="#e8b45a" /><Plus /></>,
  annotText: <><text x="5" y="18" fontFamily="Liberation Serif" fontSize="18" fontWeight="700" fill="#31363a" stroke="#eee" strokeWidth="1">T</text><path d="M1 18h4v4H1z" fill="#bbb" /><Plus y={14} /></>,
  textBubble: <><path d="M1 1H23V18H10L2 24L5 18H1Z" fill="#e8edee" /><text x="6" y="15" fontFamily="Liberation Serif" fontSize="17" fontWeight="700" fill="#333">T</text></>,
  // docks
  addLayer: <><path d="M2 2H20V20H2Z" fill="#eeeeec" /><circle cx="20" cy="20" r="4" fill="#5a8c5a" /><path d="M20 17.500v5M17.500 20h5" stroke="#fff" strokeWidth="1.500" /></>,
  funnel: <Funnel />, collapse: <TreeArrow />, expand: <TreeArrow down />,
  info: <><circle cx="12" cy="12" r="10.500" fill="#5b8cc8" stroke="#7fa8d4" /><text x="9" y="18" fontFamily="Liberation Serif" fontStyle="italic" fontWeight="700" fontSize="17" fill="#fff">i</text></>,
  paint: <><path d="M4 10l8-4 8 9-9 7-8-4z" fill="#f5c61f" /><path d="M3 10l5-3 3 4-6 4z" fill="#d33" /><path d="M6 15l5-2 3 5-5 3z" fill="#57a0dd" /><path d="M12 11L23 2" stroke="#e8a53a" strokeWidth="3.500" /></>,
  group: <><path d="M1 9v13h12" stroke="#aaa" fill="none" strokeWidth="2" /><path d="M5 5h13v14H5z" fill="#d5d5d3" stroke="#eee" strokeWidth="1.500" /><path d="M9 2h12v14" stroke="#ddd" fill="none" strokeWidth="1.500" /><path d="M9 8v9M14 1v16" stroke="#4f7396" strokeWidth="2" /><circle cx="20" cy="20" r="4" fill="#5a8c5a" /></>,
  eye: <><path d="M1 12Q12 1 23 12Q12 21 1 12Z" fill="#f2f2f2" stroke="#999" /><circle cx="12" cy="12" r="5.500" fill="#6b8fc0" /><circle cx="12" cy="11" r="2.300" fill="#123" /><path d="M1 9Q12-2 22 8" stroke="#999" fill="none" /></>,
  epsFilter: <><path d="M9 3Q2 2 3 6Q4 8 7 8Q1 9 2 13Q3 17 10 15" stroke="#aaa" strokeWidth="2" fill="none" strokeDasharray="3 1" /><path d="M10 11H24L19 17V24L15 22V17Z" fill="#ccc" /></>,
  removeLayer: <><path d="M2 2H20V20H2Z" fill="#eeeeec" /><rect x="14" y="16" width="10" height="7" rx="2" fill="#e04343" /><path d="M16 19.500h6" stroke="#fff" strokeWidth="2" /></>,
  setSquare: <><path d="M2 2L20 22H2ZM6 12V18H12Z" fill="#bbb" fillRule="evenodd" /><path d="M17 1h5v21h-3z" fill="#999" /></>,
  construct: <><path d="M4 2H22V22H4Z" fill="none" stroke="#999" strokeWidth="2" strokeDasharray="2 2" /><path d="M8 10h10v3h-3v6h-3v-6H8z" fill="#bbb" /></>,
  parallel: <path d="M1 3L22 14M2 12L23 22M4 14L20 8" stroke="#aaa" strokeWidth="2" fill="none" />,
  perp: <path d="M1 3L23 14M3 22L12 8M12 14l6 2 2-5" stroke="#aaa" strokeWidth="2" fill="none" />,
  greenGear: <Gear c="#a5ab8d" hole="#444" />,
  floater: <><path d="M1 1l7 4 0 7L2 8z" fill="#ccc" /><path d="M8 10h14v12H8z" fill="#999a86" /><path d="M4 4l9 9" stroke="#ddd" strokeWidth="3" /></>,
  models: <><g transform="scale(.62)"><Gear c="#cc1b1b" hole="#cc1b1b" /></g><g transform="translate(13 8) scale(.42)"><Gear c="#777" hole="#555" /></g><g transform="translate(7 15) scale(.38)"><Gear c={BLUE} hole="#b8cde6" /></g></>,
  pythonS: <Python />,
  report: <><path d="M4 1H15L20 6V23H4Z" fill="#fff" /><path d="M15 1v5h5" fill="#888" /><path d="M7 9h10M7 13h10M7 17h10M7 20h7" stroke="#777" strokeWidth="1.500" /></>,
  inPlace: <><path d="M1 3h15v15H1z" fill="#b9b68e" /><g transform="translate(8 6) scale(.8)"><Pencil x={1} /></g></>,
  wrench: <Wrench />,
};
const Icon = ({ n, s = 24 }: { n: string; s?: number }) => (
  <svg width={s} height={s} viewBox="0 0 24 24" overflow="visible">{glyphs[n]}</svg>
);

/* Toolbar script: "|" grip, "/" separator, "v" caret, "x" muted caret, "!" pressed icon, "-" disabled icon */
const bar1 = "| newDoc open save layoutNew layoutMgr style | !hand panSel zoomIn zoomOut zoomFull zoomSel zoomLayer zoomNative zoomLast -zoomNext mapView map3d bookmarkNew bookmarks clock refresh | identify -abacus !gear sigma -table x ruler v tip -gearRun x";
const bar2 = "| dataSrc geopkg shape feather chip mesh / virtual / | -pencils -pencil -saveEdit -polyNew -vertexTool x -multiEdit -trash -cut -copy -paste -undo -redo | -tag -diagram / tagPin tagRed / -tagPinOff -tagEye -tagMove -tagRot -tagEdit | globePlus !globeSearch binoc | python | help |";
const bar3 = "| -selRect x -selForm x deselect v selLoc | -meshEdit -meshSel x -meshXf -meshTri x | annotLayer v annotSel annotPoly annotLine annotStar annotText / textBubble v";
const Tools = ({ script }: { script: string }) => (
  <Toolbar>
    {script.split(" ").map((t, i) => {
      if (t === "|") return <Grip key={i} $first={i === 0} />;
      if (t === "/") return <Sep key={i} />;
      if (t === "v" || t === "x") return <Caret key={i} $off={t === "x"} />;
      const flag = t[0];
      const name = t.replace(/^[!-]/, "");
      return <Slot key={i} $on={flag === "!"} $off={flag === "-"}><Icon n={name} /></Slot>;
    })}
  </Toolbar>
);

const DockButtons = () => (
  <>
    <svg width="11" height="11" viewBox="0 0 11 11" fill="none" stroke="#8c9092"><rect x=".5" y=".5" width="10" height="10" rx="1.500" /><path d="M2.500 4.500h4v4h-4zM4.500 4V2.500h4v4H7" /></svg>
    <svg width="11" height="11" viewBox="0 0 11 11" fill="none" stroke="#8c9092"><rect x=".5" y=".5" width="10" height="10" rx="1.500" /><path d="M2.500 2.500l6 6M8.500 2.500l-6 6" strokeWidth="1.300" /></svg>
  </>
);

/* ---------- browser tree ---------- */
const TreeGlyph = ({ kind, sel }: { kind: string; sel?: boolean }) => {
  if (kind === "raster") return <Gap $w={16}><RasterGlyph sel={sel} /></Gap>;
  return (
    <svg width="16" height="16" viewBox="0 0 16 16">
      {kind === "pg" && <><path d="M2 2Q6-1 9 1Q14 0 15 4Q16 8 13 10L12 11V9Q11 15 9 16Q7 16 7 11Q4 13 2 9Q0 4 2 2Z" fill="#5f8fbe" /><path d="M6 2Q5 7 7 11M10 2Q12 6 11 9" stroke="#2f4f70" fill="none" strokeWidth=".8" /></>}
      {kind === "conn" && <path d="M3 8H8M13 4.500H10.500Q8 5 8 8Q8 11 10.500 11.500H13" stroke="#a5640f" strokeWidth="1.600" fill="none" />}
      {kind === "schema" && <><rect x="2" y="2" width="12" height="12" rx="3" fill="#f2f2f0" /><path d="M2 5.500Q8 7.500 14 5.500M2 9.500Q8 11.500 14 9.500" stroke="#555" fill="none" /></>}
      {kind === "poly" && <path d="M1 3Q4 1 7 3Q11 5 13 2.500L16 3V10Q14 11 12 9Q9 8 6 9.500Q4 12 1 12Q2.500 8 1 3Z" fill="#e3e3e0" />}
      {kind === "table" && <><path d="M1 1H15V15H1Z" fill="#e6e6dc" /><path d="M1 4h14M3 6.500h4M9 6.500h4M3 9h4M9 9h4M3 11.500h4M9 11.500h4M3 2.500h4M9 2.500h4" stroke="#777" /></>}
    </svg>
  );
};
const tree: [number, string, string, string][] = [
  [0, "open", "pg", "PostGIS"], [1, "open", "conn", "geodb2"], [2, "open", "schema", "bak"],
  [3, "", "raster", "clip"], [3, "closed", "poly", "dumppolygons"], [3, "closed", "poly", "intersection"],
  [3, "", "raster", "intersects"], [3, "", "raster", "landsat_nir"], [3, "", "raster", "paranhos_dem"],
  [3, "", "raster", "paranhos_slope"], [3, "", "raster", "paranhos_slope_reclass"], [3, "", "raster", "porto_ndvi"],
  [3, "", "raster", "porto_ndvi2"], [3, "", "raster", "porto_parishes"], [3, "", "raster", "tpi30"],
  [3, "", "raster", "tpi30porto"], [3, "", "raster", "union"], [2, "open", "schema", "public"],
  [3, "closed", "table", "iso_metadata"], [3, "closed", "poly", "raster_columns"], [2, "closed", "schema", "rasters"],
];
const toolbox = ["Recently used", "Cartography", "Database", "File tools", "GPS", "Interpolation", "Layer tools"];

/* ---------- raster: per row, pairs of start and end columns ---------- */
const mask = `80 87;73 89;58 62 64 65 68 91;57 66 68 95;49 96;46 98;41 100;39 102;40 111;38 111;35 112;33 112;33 113;33 113;31 114;30 116;28 119;26 122 156 159;25 124 154 161;23 127 153 163 174 187;18 129 151 190;17 131 149 192;17 136 147 194;16 196;15 199;14 201;13 201;13 200;12 199;11 176 181 186 187 197;10 176 190 194;10 174;9 173;8 172;6 170;2 169;0 167;0 165;0 164;0 163;1 161;1 160;2 155 156 159;2 154;3 154;3 153;4 153;5 152;5 152;5 151;5 151;5 150;6 150;6 149;6 149;6 148;6 148;7 147;7 147;7 146;7 146;7 145;8 145;8 144;8 144;8 143;9 15 17 20 21 143;9 11 23 142;23 131 141 142;24 129;24 128;25 127;26 126;29 126;29 126;28 30 39 57 58 125;49 50 53 54 59 98 101 125;65 97 102 123;65 96 103 122;65 94 104 122;65 93 105 122;66 92 113 122;67 90 121 122;67 89;66 88;71 86;79 85`;
/* class 2 blocks: column start, column end, row, row count */
const grey = `78 79 2 1;77 81 3 1;76 79 4 1;72 77 5 1;65 66 7 1;74 75 9 1;74 76 10 4;75 76 14 1;94 95 10 1;83 84 12 2;83 85 17 2;83 84 19 1;83 85 20 1;97 98 20 1;48 50 22 1;86 89 22 1;19 20 26 1;12 13 29 1;10 12 30 1;13 15 30 1;12 15 31 1;9 14 32 1;11 13 33 1;79 81 33 1;80 81 35 1;48 49 38 3;75 76 38 2;50 51 43 2;65 66 43 1;4 5 44 2;15 16 45 1;29 31 44 1;66 67 44 1;67 68 46 1;38 41 46 1;38 42 47 1;50 51 46 1;49 52 47 1;49 51 48 1;57 58 45 1;56 58 46 1;53 58 47 1;29 30 49 1;24 25 50 2;23 24 52 1;26 27 53 1;19 21 54 1;43 49 49 1;42 50 50 1;41 50 51 1;44 45 52 1;49 50 52 1;49 51 53 2;49 50 55 1;53 55 49 5;55 56 50 1;59 60 52 1;56 57 56 1;61 62 58 2;15 16 58 1;30 33 59 1;30 32 60 1;30 31 61 2;41 43 59 2;41 44 61 1;42 44 62 1;11 13 63 1;69 74 49 1;70 75 50 1;73 77 51 1;74 78 52 1;76 77 53 2;91 92 47 3;88 90 49 1;88 91 50 1;94 95 48 2;94 95 51 2;78 80 61 1;82 84 61 3;81 83 64 1;82 83 65 2;66 69 64 1;64 69 65 1;63 65 66 1;64 65 67 1;40 42 68 1;39 42 69 1;39 41 70 1;32 33 70 1;31 33 71 1;30 33 72 1;82 83 70 2;81 82 72 1;73 74 75 1;73 75 76 1;74 75 77 1;68 69 82 1;73 74 82 2;103 104 16 1;103 105 17 1;103 107 18 1;104 107 19 1;111 112 22 3;127 128 23 1;125 128 24 1;124 125 27 1;126 129 27 1;126 128 28 1;140 141 26 1;137 138 28 1;146 147 28 1;149 150 30 1;149 150 33 1;155 156 34 2;165 166 34 2;174 175 22 2;175 177 21 1;181 183 19 1;180 184 20 1;181 184 21 2;182 183 23 1;179 180 24 1;179 181 25 1;180 181 26 1;186 187 23 2;185 187 25 2;188 189 26 1;189 190 28 2;192 193 28 1;135 144 44 1;142 144 45 1;141 144 46 1;136 137 46 1;137 142 47 1;116 118 47 2;119 120 52 2;129 130 50 1;128 130 51 4;128 129 55 1;117 118 58 1;116 118 59 1;115 121 60 1;119 121 61 4;111 112 62 1;110 112 63 1;102 106 63 1;106 108 66 1;105 107 67 1`;
const white = "12 13 30 1;44 48 50 1";
const colX = (c: number) => Math.round(285 + 6.66 * c) - 245;
const rowY = (r: number) => Math.round(233 + 8.79 * r) - 184;
const cell = (a: number, b: number, r: number, n: number) =>
  `M${colX(a)} ${rowY(r)}H${colX(b)}V${rowY(r + n)}H${colX(a)}Z`;
const blocks = (s: string) => s.split(";").map(q => { const [a, b, r, n] = q.split(" ").map(Number); return cell(a, b, r, n); }).join("");
const maskPath = mask.split(";").map((line, r) => {
  const v = line.split(" ").map(Number);
  let d = "";
  for (let i = 0; i < v.length; i += 2) d += cell(v[i], v[i + 1], r, 1);
  return d;
}).join("");

const Tick = () => <svg width="10" height="10" viewBox="0 0 10 10"><path d="M1 5.500L4 9L8.500 1" stroke="#f0f0f0" strokeWidth="1.500" fill="none" /></svg>;
const Search = () => <svg width="14" height="14" viewBox="0 0 14 14" fill="none" stroke="#8a8e91" strokeWidth="1.200"><circle cx="5.500" cy="5.500" r="4.300" /><path d="M8.700 8.700L13 13" /></svg>;
const trayPaths = [
  "M4 11Q5 9 5 6Q5 3 8 3T11 6Q11 9 12 11ZM7 13h2M1 5Q1 3 3 2M15 5Q15 3 13 2",
  "", "", "M4 3h8v11H4zM6 2h4v2H6zM6 7h4M6 9h4M6 11h2",
  "M2 6h2l3-3v10l-3-3H2zM9 5q2 3 0 6M11 3q4 5 0 10", "", "M5 5l6 6-3 3V2l3 3-6 6", "M2 6q6-5 12 0M4 9q4-3 8 0M6 11.500q2-1.500 4 0",
];
const TrayIcon = ({ i }: { i: number }) => (
  <svg width="16" height="16" viewBox="0 0 16 16" fill="none" stroke="#d5d7d8" strokeWidth="1.100">
    <path d={trayPaths[i]} />
    {i === 0 && <circle cx="8" cy="14" r="1.200" fill="#fff" />}
    {i === 1 && <><path d="M2 14Q1 8 5 3L5 11Z M6 13Q7 6 10 2L9 12Z" fill="#fff" stroke="#fff" /><path d="M11 13Q14 9 14 3" stroke="#888" strokeWidth="2" /></>}
    {i === 2 && <g stroke="none"><path d="M8 0l7 4v8l-7 4-7-4V4z" fill="#ff318c" /><path d="M1 4l7-4v4L4 12 1 12z" fill="#ff6a3a" /><path d="M8 0l7 4-7 4z" fill="#c030e0" /><path d="M8 8l7-3v7l-7 4z" fill="#000" /><path d="M9.500 12.500l2.500-1" stroke="#fff" /></g>}
    {i === 5 && <><path d="M5 3h6v11H5zM7 1.500h2" strokeWidth="1.500" fill="#dfe2e2" stroke="#fff" /><path d="M9 4L6.500 8.500h3L7.500 12" stroke="#2a9c7c" /></>}
    {i === 7 && <circle cx="8" cy="14" r="1.500" fill="#fff" />}
  </svg>
);
const WinButton = ({ kind }: { kind: string }) => (
  <svg width="16" height="16" viewBox="0 0 16 16" fill="none" stroke="#eceded">
    <circle cx="8" cy="8" r="7.300" strokeWidth="1.200" />
    {kind === "min" && <circle cx="8" cy="8" r="2.500" fill="#fff" />}
    {kind === "max" && <circle cx="8" cy="8" r="2.600" strokeWidth="2.400" />}
    {kind === "close" && <path d="M5 5l6 6M11 5l-6 6" strokeWidth="2.200" />}
    {kind === "app" && <path d="M5.800 4.500v7M10.200 4.500v7" strokeWidth="3" strokeDasharray="3 1" />}
  </svg>
);

export default function App() {
  return (
    <Shell>
      <Global />
      <SystemBar>
        <Pill>
          <svg width="13" height="13" viewBox="0 0 13 13" fill="#ddd"><path d="M0 0h2v2H0zM5 0h2v2H5zM10 0h2v2h-2zM0 5h2v2H0zM5 5h2v2H5zM10 5h2v2h-2zM0 10h2v2H0zM5 10h2v2H5zM10 10h2v2h-2z" /></svg>
          <svg width="12" height="12" viewBox="0 0 12 12" fill="none" stroke="#ddd"><rect x="1.500" y="1" width="9" height="10" rx="1" /></svg>
          <svg width="13" height="13" viewBox="0 0 13 13" fill="none" stroke="#ccc"><path d="M1 4h7q3 0 4-4M1 7h11M1 12q5 0 6-3" /></svg>
        </Pill>
        <Menu>
          {"Project Edit View Layer Settings Plugins Vector Raster Database Web Mesh Processing Help".split(" ").map(m => <span key={m}>{m}</span>)}
        </Menu>
        <Tray>
          {trayPaths.map((_, i) => <TrayIcon key={i} i={i} />)}
          <svg width="16" height="16" viewBox="0 0 16 16"><path d="M3 5H13V6.500L8 11L3 6.500Z" fill="#fff" /></svg>
          <Clock>{"27.11.2021  18:40"}</Clock>
        </Tray>
      </SystemBar>
      <TitleBar>
        <TitleSide><svg width="22" height="22" viewBox="0 0 24 24"><QLogo /></svg><WinButton kind="app" /></TitleSide>
        <span>*Untitled Project — QGIS</span>
        <TitleSide $end><WinButton kind="min" /><WinButton kind="max" /><WinButton kind="close" /></TitleSide>
      </TitleBar>
      <Tools script={bar1} />
      <Tools script={bar2} />
      <Tools script={bar3} />
      <Body>
        <Dock $w={238}>
          <DockTitle $h={18}><span>Browser</span><DockButtons /></DockTitle>
          <SmallBar $h={32}>
            {["addLayer", "refresh", "funnel", "collapse", "info"].map(n => <SmallSlot key={n}><Icon n={n} s={15} /></SmallSlot>)}
          </SmallBar>
          <Well $h={436}>
            <TreeArea>
              <Rows>
                {tree.map(([d, st, k, label]) => {
                  const sel = label === "paranhos_slope_reclass";
                  return (
                    <Row key={label} $depth={d} $sel={sel}>
                      <Expander $state={st} /><TreeGlyph kind={k} sel={sel} /><RowLabel>{label}</RowLabel>
                    </Row>
                  );
                })}
              </Rows>
              <VScroll><ScrollBtn $dir="up" /><Track $n={61} /><Thumb $n={211} /><Track $n={121} /><ScrollBtn $dir="down" /></VScroll>
            </TreeArea>
            <HScroll><ScrollBtn $dir="left" /><Gap $w={1} /><Thumb $n={182} /><Track $n={12} /><ScrollBtn $dir="right" /></HScroll>
          </Well>
          <Dots $h={6} />
          <DockTitle $h={22}><span>Advanced Digitizing</span><DockButtons /></DockTitle>
          <SmallBar $h={29}>
            <SmallSlot $off><Icon n="setSquare" s={16} /></SmallSlot><SmallSep />
            <SmallSlot $off><Icon n="construct" s={16} /></SmallSlot>
            <SmallSlot $off><Icon n="parallel" s={16} /></SmallSlot>
            <SmallSlot $off><Icon n="perp" s={16} /></SmallSlot><SmallSep />
            <SmallSlot $off><Icon n="greenGear" s={16} /></SmallSlot><SmallSep />
            <SmallSlot $on $off><Icon n="floater" s={14} /></SmallSlot>
          </SmallBar>
          <Notice>{"CAD tools are not enabled for the\ncurrent map tool"}</Notice>
          <Dots $h={5} />
          <DockTitle $h={22}><span>Layers</span><DockButtons /></DockTitle>
          <SmallBar $h={30}>
            <SmallSlot><Icon n="paint" s={15} /></SmallSlot><SmallSlot><Icon n="group" s={15} /></SmallSlot>
            <SmallSlot><Icon n="eye" s={15} /><MiniCaret /></SmallSlot><SmallSlot><Icon n="funnel" s={15} /><MiniCaret /></SmallSlot>
            <SmallSlot $off $w={26}><Icon n="epsFilter" s={15} /></SmallSlot><Caret $off /><SmallSlot $w={23}><Icon n="expand" s={15} /></SmallSlot>
            <SmallSlot><Icon n="collapse" s={15} /></SmallSlot><SmallSlot><Icon n="removeLayer" s={15} /></SmallSlot>
          </SmallBar>
          <Well $h={226}>
            <LayerRow>
              <Expander $state="open" $w={14} /><Gap $w={4} /><Check><Tick /></Check><Gap $w={8} /><RasterGlyph sel /><b>paranhos_slope_reclass</b>
            </LayerRow>
            <Legend>Band 1<Ramp><RampLabels><span>3</span><span>1</span></RampLabels></Ramp></Legend>
          </Well>
        </Dock>
        <VDots />
        <Canvas>
          <svg width="1412" height="863" shapeRendering="crispEdges">
            <path d={maskPath} fill="#000" /><path d={blocks(grey)} fill="#808080" /><path d={blocks(white)} fill="#fff" />
          </svg>
        </Canvas>
        <VDots />
        <Dock $w={256}>
          <DockTitle $h={18}><span>Processing Toolbox</span><DockButtons /></DockTitle>
          <SmallBar $h={32}>
            <SmallSlot><Icon n="models" s={16} /><MiniCaret /></SmallSlot><SmallSlot><Icon n="pythonS" s={14} /><MiniCaret /></SmallSlot>
            <SmallSlot><Icon n="clock" s={15} /></SmallSlot><SmallSlot $on><Icon n="report" s={15} /></SmallSlot>
            <SmallSep /><SmallSlot $off><Icon n="inPlace" s={15} /></SmallSlot><SmallSep /><SmallSlot><Icon n="wrench" s={16} /></SmallSlot>
          </SmallBar>
          <Field $h={26} $gap={6} $dim $px={8}><Search />Search…</Field>
          <Well $h={135} $row>
            <Rows>
              {toolbox.map((t, i) => (
                <Row key={t} $depth={0}>
                  <Expander $state="closed" $w={24} />
                  <svg width="15" height="15" viewBox="0 0 24 24">{i ? <QLogo /> : <ClockFace />}</svg>
                  <RowLabel>{t}</RowLabel>
                </Row>
              ))}
            </Rows>
            <VScroll><ScrollBtn $dir="up" /><Thumb $n={27} /><Track $n={79} /><ScrollBtn $dir="down" /></VScroll>
          </Well>
          <Dots $h={6} />
          <DockTitle $h={20}><span>Results Viewer</span><DockButtons /></DockTitle>
          <Well $h={192} />
          <Dots $h={6} />
          <Well $h={192} />
          <Dots $h={6} />
          <DockTitle $h={20}><span>Search QMS</span><DockButtons /></DockTitle>
          <Field $h={26} $dim>Search string...</Field>
          <Buttons><PushButton $w={97}>Filter by extent</PushButton><PushButton $w={77}>All<Caret $w={14} /></PushButton></Buttons>
          <Well $h={105} />
          <Card>
            <svg width="11" height="13" viewBox="0 0 11 13"><path d="M5.500 0Q9 1 9 5Q9 8 11 10H0Q2 8 2 5Q2 1 5.500 0ZM4 11h3v2H4z" fill="#e08e0b" /></svg>
            <Link>Fresh geodata</Link>for your project
          </Card>
        </Dock>
      </Body>
      <Status>
        <Locator $h={26} $w={235} $gap={6} $dim $px={8}><Search />Type to locate (Ctrl+K)</Locator>
        <Message>1 legend entries removed.</Message>
        <StatusLabel $w={61}>Coordinate</StatusLabel>
        <Field $h={24} $w={89} $px={5}>-37117,168331</Field>
        <GrabSlot><svg width="16" height="16" viewBox="0 0 16 16"><path d="M4 0l3 7M9 1L7 7M1 5l5 3" stroke="#ccc" strokeWidth="1.800" /><path d="M5 7l6-1 4 5-3 4-5-1z" fill="#222" stroke="#ccc" strokeWidth="1.400" /></svg></GrabSlot>
        <StatusLabel $w={30}>Scale</StatusLabel>
        <Field $h={25} $w={87}><FieldText>1:13276</FieldText><Spin $w={19} $one /></Field>
        <Gap $w={35}><svg width="13" height="16" viewBox="0 0 13 16"><path d="M3 8V5a3.500 3.500 0 0 1 7 0v3" stroke="#8c8c8c" strokeWidth="2" fill="none" /><rect x=".5" y="7" width="12" height="9" rx="1" fill="#777" /></svg></Gap>
        <StatusLabel $w={52}>Magnifier</StatusLabel>
        <Field $h={25} $w={89} $px={4}><FieldText>100%</FieldText><Spin $w={14} /></Field>
        <Gap $w={10} /><StatusLabel $w={53}>Rotation</StatusLabel>
        <Field $h={25} $w={88} $px={4}><FieldText>0.0 °</FieldText><Spin $w={14} /></Field>
        <Gap $w={8} /><Check><Tick /></Check><Gap $w={5} />
        <StatusLabel $w={53}>Render</StatusLabel>
        <svg width="14" height="14" viewBox="0 0 14 14"><circle cx="7" cy="7" r="6.500" fill="#b7b9b9" /><path d="M7 0v14M0 7h14M1 4h12M1 10h12M4 1v12M10 1v12" stroke="#666" strokeWidth=".7" /></svg>
        <Gap $w={4} /><StatusLabel $w={78}>EPSG:3763</StatusLabel>
        <svg width="16" height="16" viewBox="0 0 16 16"><path d="M8 1q8 0 8 6.500 0 4-2 5l1 3-4-2H8Q0 13 0 7T8 1z" fill="#6f7173" /><path d="M3.500 7h2M7 7h2M10.500 7h2" stroke="#fff" strokeWidth="2" /></svg>
      </Status>
    </Shell>
  );
}
